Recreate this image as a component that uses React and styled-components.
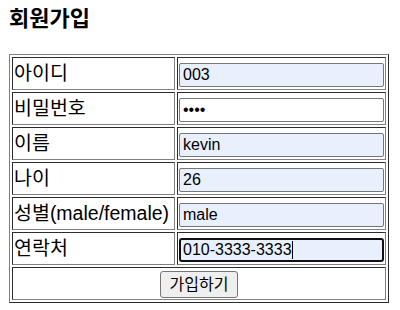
import React from 'react';
import styled, { createGlobalStyle } from 'styled-components';

const GlobalStyle = createGlobalStyle`
  body {
    margin: 8px;
    background: #fff;
    color: #000;
    font-family: "Liberation Sans", "Noto Sans CJK KR", sans-serif;
  }
`;

const Title = styled.h2`
  margin: 0 0 0 1px;
  font-size: 22px;
  line-height: 21px;
  font-weight: bold;
`;

const Table = styled.table`
  margin: 25px 0 0 1px;
  border: 1px outset gray;
  border-spacing: 2px;
  table-layout: fixed;
`;

const Cell = styled.td`
  border: 1px inset gray;
  padding: 1px;
  vertical-align: top;
  text-align: ${props => (props.center ? 'center' : 'left')};
`;

const Label = styled.span`
  display: block;
  width: 159px;
  font-size: 19.5px;
  line-height: 29px;
  white-space: nowrap;
`;

const Input = styled.input`
  display: block;
  box-sizing: border-box;
  width: 205px;
  height: 24px;
  margin: 4px 0 0;
  padding: 1px 3px;
  border: 1px solid #767676;
  border-radius: 2px;
  background: ${props => (props.filled ? '#e8f0fe' : '#fff')};
  font-family: "Liberation Sans", Arial, sans-serif;
  font-size: 16px;
  color: #000;
  outline: none;
`;

const FocusedInput = styled.div`
  display: flex;
  align-items: center;
  box-sizing: border-box;
  width: 205px;
  height: 24px;
  margin: 4px 0 0;
  padding: 0 2px;
  border: 2px solid #101010;
  border-radius: 3px;
  background: #e8f0fe;
  font-family: "Liberation Sans", Arial, sans-serif;
  font-size: 16px;
`;

const Caret = styled.span`
  display: inline-block;
  width: 1px;
  height: 18px;
  background: #000;
`;

const Button = styled.button`
  margin: 2px 0 0;
  padding: 2px 9px;
  border: 1px solid #767676;
  border-radius: 3px;
  background: #efefef;
  font-family: "Liberation Sans", "Noto Sans CJK KR", sans-serif;
  font-size: 16px;
  line-height: 21px;
  color: #000;
`;

const fields = [
  { label: '아이디', value: '003', type: 'text', filled: true },
  { label: '비밀번호', value: '1234', type: 'password', filled: false },
  { label: '이름', value: 'kevin', type: 'text', filled: true },
  { label: '나이', value: '26', type: 'text', filled: true },
  { label: '성별(male/female)', value: 'male', type: 'text', filled: true },
];

export default function App() {
  return (
    <>
      <GlobalStyle />
      <Title>회원가입</Title>
      <form onSubmit={e => e.preventDefault()}>
        <Table>
          <tbody>
            {fields.map(f => (
              <tr key={f.label}>
                <Cell><Label>{f.label}</Label></Cell>
                <Cell>
                  <Input type={f.type} defaultValue={f.value} filled={f.filled} readOnly />
                </Cell>
              </tr>
            ))}
            <tr>
              <Cell><Label>연락처</Label></Cell>
              <Cell>
                <FocusedInput role="textbox">
                  010-3333-3333<Caret />
                </FocusedInput>
              </Cell>
            </tr>
            <tr>
              <Cell colSpan={2} center>
                <Button type="submit">가입하기</Button>
              </Cell>
            </tr>
          </tbody>
        </Table>
      </form>
    </>
  );
}
